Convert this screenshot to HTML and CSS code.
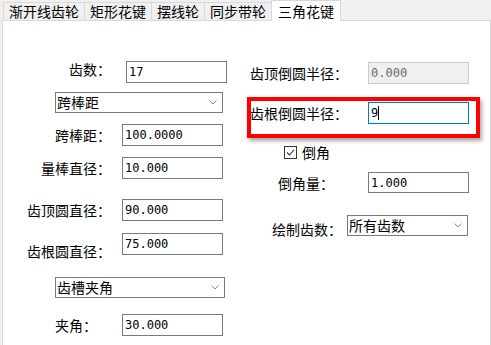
FILE: index.html
```html
<!DOCTYPE html>
<html lang="zh-CN">
<head>
  <meta charset="UTF-8">
  <title>三角花键</title>
  <link rel="stylesheet" href="styles.css">
</head>
<body>

  <div class="tabs">
    <div class="tab">渐开线齿轮</div>
    <div class="tab">矩形花键</div>
    <div class="tab">摆线轮</div>
    <div class="tab">同步带轮</div>
    <div class="tab active">三角花键</div>
  </div>

  <div class="panel">
    <div class="col-left">
      <div class="row row-count">
        <label class="label-count">齿数：</label>
        <div class="input">17</div>
      </div>
      <div class="row row-mode">
        <div class="select">
          <span>跨棒距</span>
          <svg width="8" height="5" viewBox="0 0 8 5"><path d="M0.5 0.5 L4 4 L7.5 0.5" fill="none" stroke="#8a8a8a" stroke-width="1"/></svg>
        </div>
      </div>
      <div class="row row-span">
        <label>跨棒距：</label>
        <div class="input">100.0000</div>
      </div>
      <div class="row row-pin">
        <label>量棒直径：</label>
        <div class="input">10.000</div>
      </div>
      <div class="row row-tip">
        <label>齿顶圆直径：</label>
        <div class="input">90.000</div>
      </div>
      <div class="row row-root">
        <label class="label-low">齿根圆直径：</label>
        <div class="input">75.000</div>
      </div>
      <div class="row row-angmode">
        <div class="select select-wide">
          <span>齿槽夹角</span>
          <svg width="8" height="5" viewBox="0 0 8 5"><path d="M0.5 0.5 L4 4 L7.5 0.5" fill="none" stroke="#8a8a8a" stroke-width="1"/></svg>
        </div>
      </div>
      <div class="row row-angle">
        <label class="label-angle">夹角：</label>
        <div class="input">30.000</div>
      </div>
    </div>

    <div class="col-right">
      <div class="rrow rrow-tip">
        <label class="rlabel-wide">齿顶倒圆半径：</label>
        <div class="input disabled">0.000</div>
      </div>
      <div class="rrow rrow-root">
        <label class="rlabel-wide">齿根倒圆半径：</label>
        <div class="input focused">9<span class="caret"></span></div>
        <div class="highlight"></div>
      </div>
      <div class="rrow rrow-check">
        <svg width="13" height="13" viewBox="0 0 13 13"><rect x="0.5" y="0.5" width="12" height="12" fill="#fff" stroke="#333"/><path d="M3 6.5 L5.5 9 L10 3.8" fill="none" stroke="#333" stroke-width="1.1"/></svg>
        <span class="check-text">倒角</span>
      </div>
      <div class="rrow rrow-chamfer">
        <label class="rlabel-chamfer">倒角量：</label>
        <div class="input">1.000</div>
      </div>
      <div class="rrow rrow-draw">
        <label class="rlabel-draw">绘制齿数：</label>
        <div class="select select-draw">
          <span>所有齿数</span>
          <svg width="8" height="5" viewBox="0 0 8 5"><path d="M0.5 0.5 L4 4 L7.5 0.5" fill="none" stroke="#8a8a8a" stroke-width="1"/></svg>
        </div>
      </div>
    </div>
  </div>

</body>
</html>
```

FILE: styles.css
```css
body {
  margin: 0;
  background-color: #f0f0f0;
  font-family: "Noto Sans CJK SC", sans-serif;
  font-size: 14px;
  color: #000;
  overflow: hidden;
}

/* tab strip */
.tabs {
  display: flex;
  align-items: flex-end;
  height: 20px;
  padding-left: 3px;
}

.tab {
  height: 17px;
  line-height: 17px;
  padding: 0 5px;
  border: 1px solid #d9d9d9;
  border-bottom: none;
  margin-left: -1px;
  background: #f0f0f0;
  white-space: nowrap;
}

.tab:first-child {
  margin-left: 0;
}

.tab.active {
  height: 20px;
  line-height: 20px;
  padding: 0 6px;
  margin-bottom: -1px;
  background: #fff;
  position: relative;
}

/* page body */
.panel {
  display: flex;
  margin-left: 2px;
  height: 340px;
  background: #fff;
  border: 1px solid #d9d9d9;
}

.col-left {
  width: 237px;
}

.col-right {
  flex: 1;
}

.row {
  display: flex;
  align-items: center;
  height: 22px;
}

.row label {
  width: 108px;
  margin-right: 11px;
  text-align: right;
  line-height: 22px;
  white-space: nowrap;
}

.row-count { margin-top: 40px; }
.row-mode { margin-top: 9px; height: 21px; }
.row-span { margin-top: 11px; }
.row-pin { margin-top: 11px; }
.row-tip { margin-top: 20px; }
.row-root { margin-top: 12px; align-items: flex-start; }
.row-angmode { margin-top: 22px; height: 21px; }
.row-angle { margin-top: 16px; }

.label-count {
  padding-right: 4px;
  margin-top: -6px;
}

.row .label-low {
  padding-top: 7px;
}

.row .label-angle {
  width: 94px;
  margin-right: 25px;
}

.input {
  width: 101px;
  height: 22px;
  box-sizing: border-box;
  border: 1px solid #7a7a7a;
  padding: 0 2px;
  font-family: "DejaVu Sans Mono", monospace;
  font-size: 12px;
  line-height: 20px;
  white-space: nowrap;
}

.input.disabled {
  background: #f0f0f0;
  border-color: #cccccc;
  color: #6d6d6d;
}

.input.focused {
  border-color: #0078d7;
}

.caret {
  display: inline-block;
  width: 1px;
  height: 14px;
  background: #000;
  vertical-align: middle;
  margin-top: -2px;
}

.select {
  display: flex;
  align-items: center;
  justify-content: space-between;
  width: 168px;
  height: 21px;
  margin-left: 52px;
  box-sizing: border-box;
  border: 1px solid #7a7a7a;
  padding: 0 5px 0 1px;
  line-height: 19px;
}

.select-wide {
  width: 170px;
}

/* right column */
.rrow {
  display: flex;
  align-items: center;
  height: 22px;
}

.rrow label {
  line-height: 22px;
  white-space: nowrap;
}

.rrow-tip { margin-top: 41px; padding-left: 10px; }
.rrow-root { margin-top: 18px; padding-left: 10px; position: relative; }
.rrow-check { margin-top: 22px; height: 13px; padding-left: 44px; }
.rrow-chamfer { margin-top: 13px; padding-left: 38px; height: 21px; }
.rrow-draw { margin-top: 22px; padding-left: 32px; height: 21px; }

.rlabel-wide { width: 118px; }
.rlabel-chamfer { width: 90px; }
.rlabel-draw { width: 75px; padding-top: 6px; }

.rrow-chamfer .input {
  height: 21px;
}

.check-text {
  margin-left: 5px;
  line-height: 13px;
}

.select-draw {
  width: 121px;
  margin-left: 0;
}

/* red annotation frame */
.highlight {
  position: absolute;
  top: -5px;
  left: 7px;
  right: 10px;
  bottom: -14px;
  border: 4px solid #ff0000;
  box-shadow: 2px 3px 4px rgba(0, 0, 0, 0.35);
  pointer-events: none;
}
```
